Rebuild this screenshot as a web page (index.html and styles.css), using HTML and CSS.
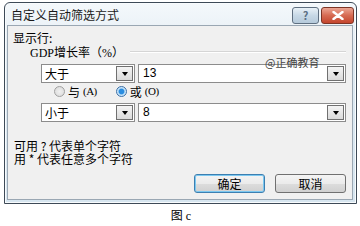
FILE: index.html
```html
<!DOCTYPE html>
<html>
<head>
<meta charset="utf-8">
<link rel="stylesheet" href="styles.css">
</head>
<body>
<div class="dialog">
  <div class="titlebar">
    <span class="title">自定义自动筛选方式</span>
    <div class="tbtns">
      <div class="tbtn help">?</div>
      <div class="tbtn close">
        <svg width="12" height="9" viewBox="0 0 12 9"><path d="M1.5 1 L10.5 8 M10.5 1 L1.5 8" stroke="#fff" stroke-width="2.4" stroke-linecap="round"/></svg>
      </div>
    </div>
  </div>
  <div class="client">
    <div class="lbl-show">显示行:</div>
    <div class="group">
      <span class="glabel">GDP增长率（%）</span>
      <span class="gline"></span>
    </div>
    <div class="row first">
      <div class="combo op"><span class="val">大于</span><span class="drop"><i></i></span></div>
      <div class="combo vl"><span class="val num">13</span><span class="drop"><i></i></span></div>
    </div>
    <div class="radios">
      <span class="radio"><span class="dot"></span>与<span class="acc">(A)</span></span>
      <span class="radio on"><span class="dot"></span>或<span class="acc">(O)</span></span>
    </div>
    <div class="row">
      <div class="combo op"><span class="val">小于</span><span class="drop"><i></i></span></div>
      <div class="combo vl"><span class="val num">8</span><span class="drop"><i></i></span></div>
    </div>
    <div class="hints">
      <div class="hint">可用 ? 代表单个字符</div>
      <div class="hint">用 * 代表任意多个字符</div>
    </div>
    <div class="btns">
      <div class="btn def">确定</div>
      <div class="btn">取消</div>
    </div>
    <div class="wm">@正确教育</div>
  </div>
</div>
<div class="caption">图 c</div>
</body>
</html>
```
FILE: styles.css
```css
html, body { margin: 0; padding: 0; background: #fff; }
body { width: 360px; height: 226px; overflow: hidden; font-family: "Noto Sans CJK SC", "DejaVu Sans", sans-serif; font-size: 12px; color: #000; }

.dialog {
  margin: 2px 0 0 4px;
  width: 351px;
  height: 200px;
  border: 1px solid #3d4a57;
  border-radius: 6px 6px 0 0;
  background: linear-gradient(#f4f8fb, #dfeaf2 30%, #d7e6f0);
  display: flex;
  flex-direction: column;
  box-shadow: inset 0 0 0 1px #f8fbfd;
}
.titlebar {
  height: 22px;
  display: flex;
  align-items: flex-start;
  justify-content: space-between;
  flex: none;
}
.title { font-size: 12px; line-height: 13px; margin: 5px 0 0 6px; color: #1a1a1a; }
.tbtns { display: flex; margin-right: 2px; gap: 2px; }
.tbtn {
  height: 15px;
  border: 1px solid #5f6f80;
  border-radius: 3px;
  display: flex; align-items: center; justify-content: center;
  margin-top: 4px;
}
.help { width: 25px; background: linear-gradient(#e9f1f7, #c7d8e6 50%, #b6cadb); color: #5b6f84; font-weight: bold; font-size: 11px; line-height: 15px; }
.close { width: 31px; background: linear-gradient(#eba694, #d66a52 50%, #c4452d); border-color: #7d3425; }

.client {
  flex: 1;
  margin: 0 3px 3px 2px;
  background: #f0f0f0;
  border: 1px solid #9aa7b3;
  position: relative;
  padding: 0 6px 0 5px;
  display: flex;
  flex-direction: column;
}
.lbl-show { margin-top: 6px; line-height: 12px; height: 12px; font-size: 12px; }
.group { display: flex; align-items: center; margin-top: 3px; height: 13px; padding-left: 17px; }
.glabel { font-family: "Liberation Serif", "Noto Sans CJK SC", serif; font-size: 12px; line-height: 13px; white-space: nowrap; }
.gline { flex: 1; height: 1px; background: #d5d5d5; border-bottom: 1px solid #fff; margin-left: 6px; margin-top: -3px; }

.row { display: flex; gap: 3px; padding-left: 28px; margin-top: 4px; height: 19px; }
.combo {
  height: 17px;
  border: 1px solid #8c8c8c;
  background: #fff;
  display: flex;
  align-items: center;
  justify-content: space-between;
  padding-right: 1px;
}
.combo.op { width: 92px; }
.combo.vl { width: 207px; }
.val { padding-left: 3px; font-size: 12px; line-height: 15px; }
.num { font-family: "Liberation Sans", Arial, sans-serif; padding-left: 4px; }
.drop {
  width: 17px; height: 15px;
  box-sizing: border-box;
  border: 1px solid #707070;
  background: linear-gradient(#f4f4f4, #dadada);
  display: flex; align-items: center; justify-content: center;
}
.drop i { width: 0; height: 0; border-left: 3.5px solid transparent; border-right: 3.5px solid transparent; border-top: 4px solid #000; }

.radios { display: flex; gap: 19px; padding-left: 41px; height: 16px; align-items: center; }
.radio { display: flex; align-items: center; gap: 3px; font-size: 12px; line-height: 13px; }
.acc { font-family: "Liberation Serif", serif; font-size: 11px; letter-spacing: -0.5px; }
.dot { width: 9px; height: 9px; border-radius: 50%; border: 1px solid #a0a0a0; background: radial-gradient(circle, #f0f0f0, #d8d8d8); box-sizing: content-box; }
.radio.on .dot { border-color: #3b6fa6; background: radial-gradient(circle, #2a8de0 0 2.4px, #bfe0f8 3.4px, #e4f1fb); }

.hints { margin-top: 18px; margin-left: 1px; font-size: 12px; }
.hint { height: 12.5px; line-height: 12.5px; }

.btns { display: flex; justify-content: flex-end; gap: 10px; margin-top: auto; margin-bottom: 6px; }
.btn {
  width: 69px; height: 17px;
  border: 1px solid #707070;
  border-radius: 3px;
  background: linear-gradient(#f4f4f4 0, #ebebeb 50%, #dddddd 51%, #d0d0d0);
  text-align: center;
  font-size: 12px; line-height: 17px;
}
.btn.def { border-color: #3c7fb1; box-shadow: inset 0 0 0 1px #7cc8f0; }

.wm { position: absolute; left: 257px; top: 30px; color: #444; font-size: 11px; line-height: 12px; }

.caption { margin-top: 5px; text-align: center; font-family: "Liberation Serif", "Noto Sans CJK SC", serif; font-size: 12px; line-height: 14px; padding-left: 2px; }
```
